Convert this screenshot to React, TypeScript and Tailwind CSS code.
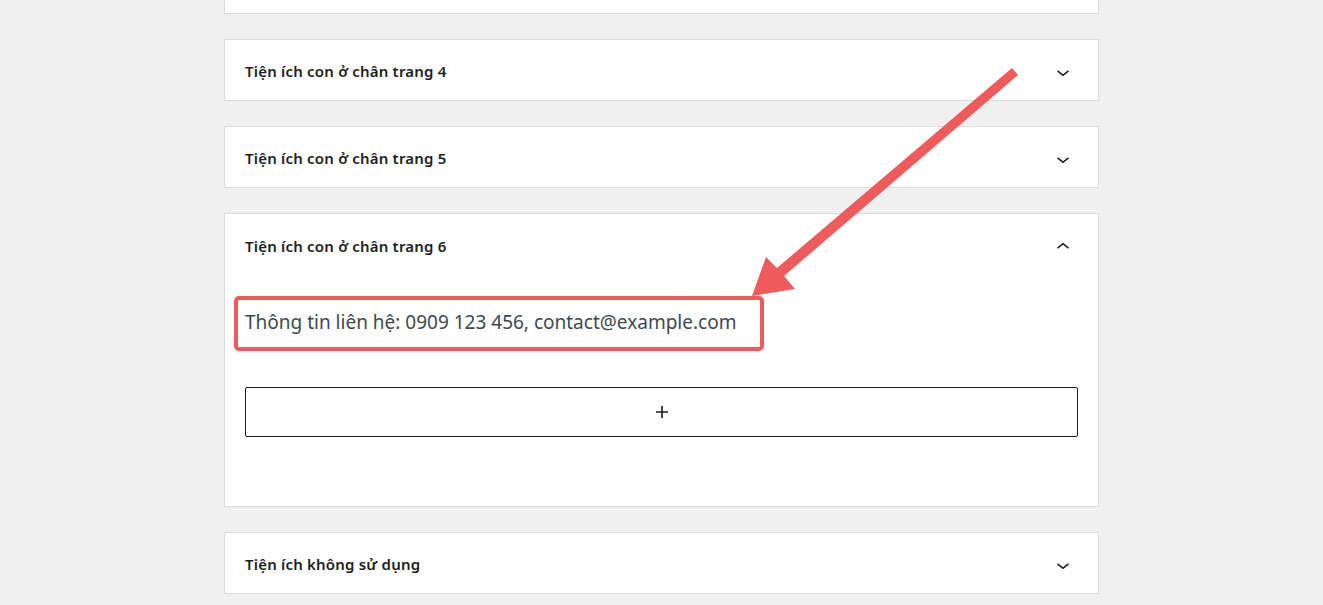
import React from 'react';

const font = { fontFamily: '"Noto Sans", "Open Sans", sans-serif' };

function ChevronDown() {
  return (
    <svg width="26" height="26" viewBox="0 0 24 24" className="text-[#1e1e1e]" fill="currentColor">
      <path d="M17.5 11.6L12 16l-5.5-4.4.9-1.2L12 14l4.6-3.6 1 1.2z" />
    </svg>
  );
}

function ChevronUp() {
  return (
    <svg width="26" height="26" viewBox="0 0 24 24" className="text-[#1e1e1e]" fill="currentColor">
      <path d="M6.5 12.4L12 8l5.5 4.4-.9 1.2L12 10l-4.6 3.6-1-1.2z" />
    </svg>
  );
}

function PlusIcon() {
  return (
    <svg width="24" height="24" viewBox="0 0 24 24" className="text-[#1e1e1e]" fill="currentColor">
      <path d="M18 11.2h-5.2V6h-1.6v5.2H6v1.6h5.2V18h1.6v-5.2H18z" />
    </svg>
  );
}

function Panel({ title }: { title: string }) {
  return (
    <div className="h-[62px] bg-white border border-[#dcdcde] flex items-center justify-between pl-5 pr-[22px] pt-[3px]">
      <h2 className="text-[15px] font-semibold tracking-[0.2px] text-[#1e1e1e]">{title}</h2>
      <ChevronDown />
    </div>
  );
}

export default function App() {
  return (
    <div className="relative min-h-[605px] w-full bg-[#f0f0f0] overflow-hidden" style={font}>
      <div className="mx-auto w-[875px] flex flex-col gap-[25px]">
        {/* tail of the panel above */}
        <div className="h-[14px] bg-white border-x border-b border-[#dcdcde]" />

        <Panel title="Tiện ích con ở chân trang 4" />
        <Panel title="Tiện ích con ở chân trang 5" />

        {/* expanded panel */}
        <div className="relative h-[294px] bg-white border border-[#dcdcde]">
          <div className="h-[62px] flex items-center justify-between pl-5 pr-[22px] pt-[3px]">
            <h2 className="text-[15px] font-semibold tracking-[0.2px] text-[#1e1e1e]">Tiện ích con ở chân trang 6</h2>
            <ChevronUp />
          </div>
          <div className="px-5 pt-[32px]">
            <p className="text-[19px] leading-[28px] text-[#3c4a4f]">
              Thông tin liên hệ: 0909 123 456, contact@example.com
            </p>
            <button className="mt-[51px] w-full h-[50px] border border-[#1e1e1e] rounded-[2px] flex items-center justify-center">
              <PlusIcon />
            </button>
          </div>
          {/* annotation box */}
          <div className="absolute left-[9px] top-[82px] w-[530px] h-[55px] border-4 border-[#ef5a5a] rounded-[5px]" />
        </div>

        <Panel title="Tiện ích không sử dụng" />
      </div>

      {/* annotation arrow */}
      <svg className="absolute left-0 top-0 pointer-events-none" width="1323" height="605" viewBox="0 0 1323 605">
        <polygon
          fill="#ef5a5a"
          points="1012,68 1018,75 784,276 795,289 752,296 766,257 777,268"
        />
      </svg>
    </div>
  );
}
